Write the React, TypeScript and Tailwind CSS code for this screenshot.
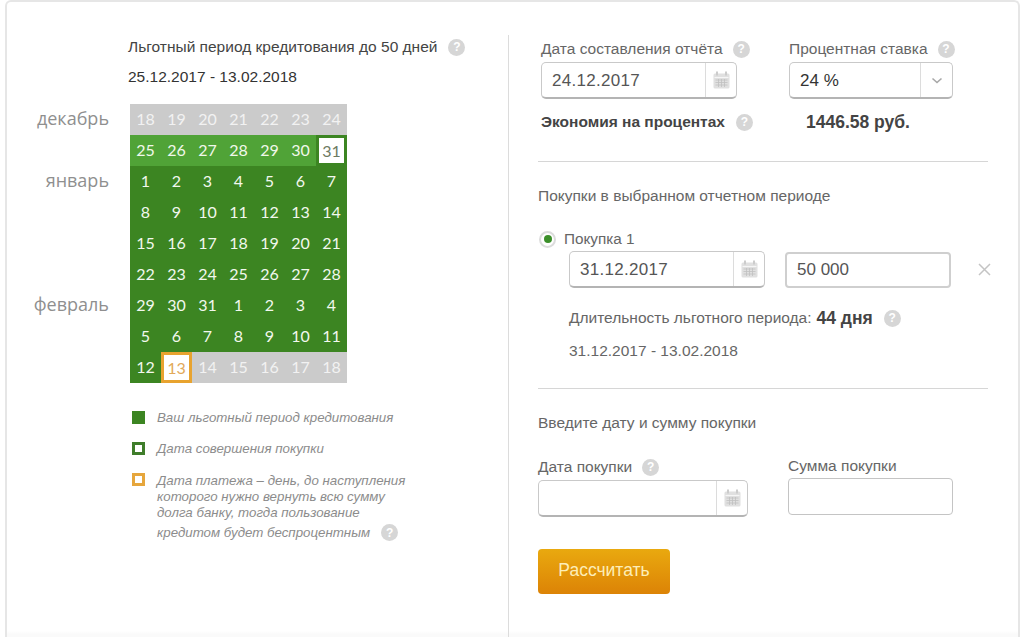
import React from "react";

const font = "font-['Liberation_Sans',Arial,sans-serif]";

function Help({ className = "" }: { className?: string }) {
  return (
    <span className={`inline-flex h-[17px] w-[17px] shrink-0 items-center justify-center rounded-full bg-[#d6d6d6] text-[12px] font-bold not-italic leading-none text-white ${className}`}>
      ?
    </span>
  );
}

function CalIcon() {
  return (
    <svg width="17" height="18" viewBox="0 0 17 18" fill="none">
      <rect x="0.5" y="2.5" width="16" height="15" rx="1.5" fill="#e0e0e0" />
      <rect x="3" y="0.5" width="2" height="4" fill="#cccccc" />
      <rect x="12" y="0.5" width="2" height="4" fill="#cccccc" />
      <rect x="1.5" y="6" width="14" height="1" fill="#f6f6f6" />
      <path d="M2.5 9h12M2.5 11.5h12M2.5 14h12M5.5 8v8M8.5 8v8M11.5 8v8" stroke="#c0c0c0" strokeWidth="0.8" />
    </svg>
  );
}

function DateInput({ value, w, h = "h-[37px]" }: { value?: string; w: string; h?: string }) {
  return (
    <div className={`flex shrink-0 ${h} ${w} rounded-[5px] border border-[#c9c9c9] border-b-2 border-b-[#b4b4b4] bg-white`}>
      <div className="flex-1 pl-[10px] text-[17px] leading-[35px] tracking-[0.3px] text-[#555]">{value}</div>
      <div className="flex w-[31px] items-center justify-center border-l border-[#dcdcdc]">
        <CalIcon />
      </div>
    </div>
  );
}

const rows: { n: number; c: "gray" | "light" | "dark" | "white" | "orange" }[][] = [
  [18, 19, 20, 21, 22, 23, 24].map((n) => ({ n, c: "gray" as const })),
  [25, 26, 27, 28, 29, 30].map((n) => ({ n, c: "light" as const })).concat([{ n: 31, c: "white" as any }]) as any,
  [1, 2, 3, 4, 5, 6, 7].map((n) => ({ n, c: "dark" as const })),
  [8, 9, 10, 11, 12, 13, 14].map((n) => ({ n, c: "dark" as const })),
  [15, 16, 17, 18, 19, 20, 21].map((n) => ({ n, c: "dark" as const })),
  [22, 23, 24, 25, 26, 27, 28].map((n) => ({ n, c: "dark" as const })),
  [29, 30, 31, 1, 2, 3, 4].map((n) => ({ n, c: "dark" as const })),
  [5, 6, 7, 8, 9, 10, 11].map((n) => ({ n, c: "dark" as const })),
  [
    { n: 12, c: "dark" },
    { n: 13, c: "orange" },
    ...[14, 15, 16, 17, 18].map((n) => ({ n, c: "gray" as const })),
  ],
];

const cellClass = {
  gray: "bg-[#cbcbcb] text-[#f2f2f2] pb-[2px]",
  light: "bg-[#50a337] text-[#f0f8ea] pb-[2px]",
  dark: "bg-[#3c8522] text-[#f2f8ee] pb-[2px]",
  white: "bg-white text-[#6d7a62] border-[3px] border-[#3c8522]",
  orange: "bg-white text-[#e2a95a] border-[3px] border-[#e8a32f]",
};

const months = ["декабрь", "", "январь", "", "", "", "февраль", "", ""];

export default function App() {
  return (
    <div className={`${font} h-[637px] w-[1024px] overflow-hidden bg-white`}>
      <div className="mx-[5px] flex h-[637px] w-[1015px] rounded-t-[6px] border-x-2 border-t-2 border-[#e6e6e6] bg-[linear-gradient(to_bottom,#ffffff_629px,#fafafa_632px)]">
        {/* left column */}
        <div className="w-[501px] shrink-0">
          <div className="ml-[121px] mt-[36px] flex items-center gap-[11px] text-[15.5px] leading-[18px] text-[#444]">
            <span>Льготный период кредитования до 50 дней</span>
            <Help />
          </div>
          <div className="ml-[121px] mt-[12px] text-[15.5px] leading-[18px] text-[#333]">25.12.2017 - 13.02.2018</div>

          <div className="mt-[18px] flex">
            <div className="w-[102px] shrink-0 text-right font-['Open_Sans',sans-serif] text-[18px] text-[#8f8f8f]">
              {months.map((m, i) => (
                <div key={i} className="h-[31px] leading-[29px]">{m}</div>
              ))}
            </div>
            <div className="ml-[21px] grid grid-cols-[repeat(7,31px)] grid-rows-[repeat(9,31px)] font-['Lato',sans-serif] text-[16px]">
              {rows.flat().map((d, i) => (
                <div key={i} className={`flex items-center justify-center ${cellClass[d.c]}`}>{d.n}</div>
              ))}
            </div>
          </div>

          <div className="ml-[125px] mt-[28px] flex flex-col text-[13.3px] italic text-[#8c8c8c]">
            <div className="flex items-start gap-[12px]">
              <span className="h-[13px] w-[13px] shrink-0 bg-[#3c8522]" />
              <span className="leading-[14px]">Ваш льготный период кредитования</span>
            </div>
            <div className="mt-[17px] flex items-start gap-[12px]">
              <span className="h-[13px] w-[13px] shrink-0 border-[3px] border-[#3f7d2a] bg-white" />
              <span className="leading-[14px]">Дата совершения покупки</span>
            </div>
            <div className="mt-[17px] flex items-start gap-[12px]">
              <span className="h-[13px] w-[13px] shrink-0 border-[3px] border-[#e6a63c] bg-white" />
              <div className="leading-[16px]">
                <div>Дата платежа – день, до наступления</div>
                <div>которого нужно вернуть всю сумму</div>
                <div>долга банку, тогда пользование</div>
                <div className="mt-[3px] flex items-center gap-[11px]">
                  <span>кредитом будет беспроцентным</span>
                  <Help />
                </div>
              </div>
            </div>
          </div>
        </div>

        {/* right column */}
        <div className="mt-[33px] w-[480px] shrink-0 border-l border-[#dcdcdc] pl-[29px]">
          <div className="ml-[3px] mt-[5px] flex">
            <div className="w-[248px]">
              <div className="flex items-center gap-[10px] text-[15.5px] leading-[18px] text-[#666]">
                <span>Дата составления отчёта</span>
                <Help />
              </div>
              <div className="mt-[4px]"><DateInput value="24.12.2017" w="w-[196px]" /></div>
            </div>
            <div>
              <div className="flex items-center gap-[10px] text-[15.5px] leading-[18px] text-[#666]">
                <span>Процентная ставка</span>
                <Help />
              </div>
              <div className="mt-[4px] flex h-[37px] w-[164px] rounded-[5px] border border-[#c9c9c9] border-b-2 border-b-[#b4b4b4] bg-white">
                <div className="flex-1 pl-[10px] text-[17px] leading-[35px] text-[#333]">24 %</div>
                <div className="flex w-[32px] items-center justify-center border-l border-[#dcdcdc]">
                  <svg width="12" height="7" viewBox="0 0 12 7" fill="none"><path d="M1.5 1.5 6 5.5l4.5-4" stroke="#a8a8a8" strokeWidth="1.6" /></svg>
                </div>
              </div>
            </div>
          </div>
          <div className="ml-[3px] mt-[14px] flex items-center">
            <span className="text-[15.5px] font-bold leading-[18px] text-[#444]">Экономия на процентах</span>
            <Help className="ml-[11px]" />
            <span className="ml-[53px] text-[17.5px] font-bold leading-[18px] text-[#444]">1446.58 руб.</span>
          </div>
          <div className="mt-[30px] h-px w-[450px] bg-[#d6d6d6]" />
          <div className="mt-[25px] text-[15.5px] leading-[18px] text-[#666]">Покупки в выбранном отчетном периоде</div>

          <div className="ml-[1px] mt-[25px] flex items-center gap-[8px]">
            <span className="-my-[2px] flex h-[17px] w-[17px] items-center justify-center rounded-full border-2 border-[#dcdcdc] bg-white">
              <span className="h-[8px] w-[8px] rounded-full bg-[#3c8f2a]" />
            </span>
            <span className="text-[15.3px] leading-[18px] text-[#666]">Покупка 1</span>
          </div>
          <div className="ml-[31px] mt-[3px] flex items-center">
            <DateInput value="31.12.2017" w="w-[196px]" />
            <div className="ml-[20px] h-[36px] w-[166px] shrink-0 rounded-[4px] border-2 border-[#cfcfcf] bg-white pl-[10px] text-[17px] leading-[32px] text-[#555]">50 000</div>
            <svg className="ml-[27px] shrink-0" width="13" height="13" viewBox="0 0 13 13" fill="none"><path d="M1 1l11 11M12 1 1 12" stroke="#c4c4c4" strokeWidth="1.5" /></svg>
          </div>
          <div className="ml-[31px] mt-[21px] flex items-center text-[15.5px] leading-[18px] text-[#666]">
            <span>Длительность льготного периода:</span>
            <span className="ml-[5px] text-[17.5px] font-bold text-[#444]">44 дня</span>
            <Help className="ml-[11px]" />
          </div>
          <div className="ml-[31px] mt-[15px] text-[15.5px] leading-[18px] text-[#666]">31.12.2017 - 13.02.2018</div>
          <div className="mt-[28px] h-px w-[450px] bg-[#d6d6d6]" />
          <div className="mt-[25px] text-[15.5px] leading-[18px] text-[#666]">Введите дату и сумму покупки</div>

          <div className="mt-[26px] flex">
            <div className="w-[250px]">
              <div className="flex items-center gap-[10px] text-[15.5px] leading-[18px] text-[#666]">
                <span>Дата покупки</span>
                <Help />
              </div>
              <div className="mt-[4px]"><DateInput w="w-[210px]" /></div>
            </div>
            <div className="-mt-[1px]">
              <div className="text-[15.5px] leading-[18px] text-[#666]">Сумма покупки</div>
              <div className="mt-[3px] h-[37px] w-[165px] rounded-[4px] border border-[#c4c4c4] bg-white" />
            </div>
          </div>
          <button className="mt-[32px] flex h-[45px] w-[132px] items-center justify-center rounded-[4px] bg-gradient-to-b from-[#e9a90f] to-[#dc8306] pb-[2px] text-[17.5px] text-[#fdeeb8]">
            Рассчитать
          </button>
        </div>
      </div>
    </div>
  );
}
